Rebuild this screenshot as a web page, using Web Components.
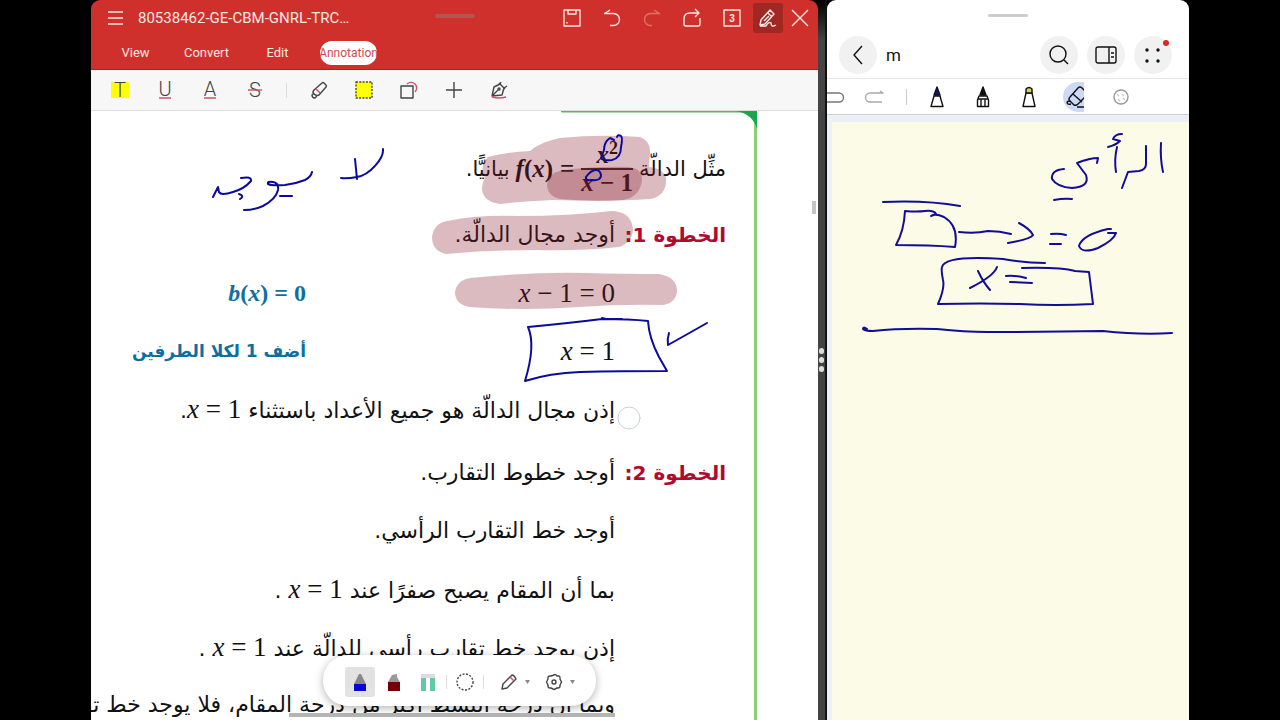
<!DOCTYPE html>
<html lang="ar">
<head>
<meta charset="utf-8">
<title>80538462-GE-CBM-GNRL-TRC</title>
<style>
  body {
    margin: 0;
    background: #000;
    font-family: Roboto, sans-serif;
  }
</style>
</head>
<body>
<split-screen>
  <pdf-window slot="start"></pdf-window>
  <notes-window slot="end"></notes-window>
</split-screen>

<script>
class SplitScreen extends HTMLElement {
  constructor() {
    super();
    this.attachShadow({ mode: "open" });
    this.shadowRoot.innerHTML = `
    <style>
      :host {
        display: flex;
        height: 100vh;
        padding: 0 91px;
        box-sizing: border-box;
        overflow: hidden;
      }
      .start { flex: 727; min-width: 0; display: flex; }
      .end { flex: 362; min-width: 0; display: flex; }
      .divider {
        flex: none;
        width: 9px;
        display: flex;
        flex-direction: column;
        align-items: center;
        justify-content: center;
        gap: 3px;
        background: linear-gradient(#000, #444 40px);
        border-right: 2px solid #111;
        box-sizing: border-box;
      }
      .divider i { width: 5px; height: 6px; border-radius: 3px; background: #ddd; }
    </style>
    <div class="start"><slot name="start"></slot></div>
    <div class="divider"><i></i><i></i><i></i></div>
    <div class="end"><slot name="end"></slot></div>
    `;
  }
}
customElements.define("split-screen", SplitScreen);

// Button that holds one svg icon
class ToolButton extends HTMLElement {
  constructor() {
    super();
    this.attachShadow({ mode: "open" });
  }

  connectedCallback() {
    this.shadowRoot.innerHTML = `
    <style>
      :host { display: flex; flex: none; align-items: center; justify-content: center; box-sizing: border-box; }
      button {
        display: flex;
        align-items: center;
        justify-content: center;
        width: var(--button-width, 30px);
        height: var(--button-height, 30px);
        padding: 0;
        border: 0;
        border-radius: var(--button-radius, 3px);
        background: var(--button-background, none);
        color: inherit;
        overflow: var(--button-overflow, visible);
      }
      ::slotted(svg) {
        display: block;
        flex: none;
        fill: none;
        stroke: currentColor;
        stroke-width: 1.4;
        stroke-linejoin: round;
        overflow: visible;
      }
    </style>
    <button type="button" aria-label="${this.getAttribute("label")}"><slot></slot></button>
    `;
  }
}
customElements.define("tool-button", ToolButton);

class PdfHeader extends HTMLElement {
  constructor() {
    super();
    this.attachShadow({ mode: "open" });
    this.shadowRoot.innerHTML = `
    <style>
      :host {
        display: block;
        position: relative;
        height: 70px;
        background: #d0302b;
        border-bottom: 1px solid #a92521;
        box-sizing: border-box;
        color: #fde8e4;
      }
      .bar { display: flex; align-items: center; height: 36px; padding: 0 2px 0 9px; }
      h1 { flex: 1; margin: 0 0 0 8px; font: 400 15px/36px Roboto, sans-serif; white-space: nowrap; }
      tool-button { width: 40px; }
      .narrow { width: 32px; }
      .menu { width: 30px; }
      .active { --button-background: #a12822; }
      .handle {
        position: absolute;
        left: 50%;
        top: 14px;
        width: 40px;
        height: 4px;
        margin-left: -20px;
        border-radius: 2px;
        background: #b4564f;
      }
      nav { display: flex; height: 34px; padding-left: 9px; align-items: center; }
      a {
        display: flex;
        justify-content: center;
        width: 71px;
        color: inherit;
        text-decoration: none;
        font-size: 13px;
        line-height: 24px;
      }
      a[aria-current] span {
        width: 57px;
        display: flex;
        justify-content: center;
        border-radius: 12px;
        background: #fff;
        color: #cf4a50;
        font-size: 12px;
      }
    </style>
    <div class="bar">
      <tool-button class="menu" label="Menu"><svg width="16" height="14" viewBox="0 0 16 14"><path d="M1 1h15M1 7h15M1 13h15"/></svg></tool-button>
      <h1 dir="ltr">80538462-GE-CBM-GNRL-TRC…</h1>
      <tool-button label="Save"><svg width="18" height="18" viewBox="0 0 18 18"><path d="M1 1h16v16H1zM5 1v4h8V1M4 13v1.500"/></svg></tool-button>
      <tool-button label="Undo"><svg width="18" height="18" viewBox="0 0 18 18"><path d="M7 1L1.500 4.500M1 4.500h9.500a6 6 0 0 1 0 12H7"/></svg></tool-button>
      <tool-button label="Redo"><svg width="18" height="18" viewBox="0 0 18 18" opacity=".35"><path d="M11 1l5.500 3.500M17 4.500H7.500a6 6 0 0 0 0 12H9"/></svg></tool-button>
      <tool-button label="Share"><svg width="18" height="18" viewBox="0 0 18 18"><path d="M1 9v6q0 2 2 2h12q2 0 2-2V9M1 10q0-6 6-6h9M12 0l4 4-4 4"/></svg></tool-button>
      <tool-button label="Pages"><svg width="18" height="18" viewBox="0 0 18 18"><path d="M1 1h16v16H1z"/><text x="9" y="13" text-anchor="middle" font-size="10" font-weight="700" fill="currentColor" stroke="none">3</text></svg></tool-button>
      <tool-button class="narrow active" label="Annotate"><svg width="18" height="18" viewBox="0 0 18 18"><path d="M2 11L11 1l4 4-9 10-5 1zM9 4l4 4M5 12l5-5M1 17h6q3-5 5-3 0 5 5 2"/></svg></tool-button>
      <tool-button class="narrow" label="Close"><svg width="16" height="16" viewBox="0 0 16 16"><path d="M0 0l16 16M16 0L0 16"/></svg></tool-button>
    </div>
    <div class="handle"></div>
    <nav dir="ltr">
      <a href="#view"><span>View</span></a>
      <a href="#convert"><span>Convert</span></a>
      <a href="#edit"><span>Edit</span></a>
      <a href="#annotation" aria-current="page"><span>Annotation</span></a>
    </nav>
    `;
  }
}
customElements.define("pdf-header", PdfHeader);

class AnnotationTools extends HTMLElement {
  constructor() {
    super();
    this.attachShadow({ mode: "open" });
    this.shadowRoot.innerHTML = `
    <style>
      :host {
        display: flex;
        align-items: center;
        height: 41px;
        padding-left: 6px;
        box-sizing: border-box;
        background: #f7f7f8;
        border-bottom: 1px solid #dcdcdc;
        color: #444;
      }
      tool-button { width: 45px; }
      .line { width: 1px; height: 15px; margin: 0 9px; background: #ddd; }
      text { font: 300 20px Roboto, sans-serif; fill: #444; stroke: none; text-anchor: middle; }
      .red { stroke: #d0506e; }
    </style>
    <tool-button label="Highlight"><svg width="18" height="18" viewBox="0 0 18 18"><path d="M0 1h18v16H0z" fill="#ff0" stroke="none"/><text x="9" y="16">T</text></svg></tool-button>
    <tool-button label="Underline"><svg width="18" height="18" viewBox="0 0 18 18"><text x="9" y="15">U</text><path class="red" d="M3 17h12"/></svg></tool-button>
    <tool-button label="Text colour"><svg width="18" height="18" viewBox="0 0 18 18"><text x="9" y="15">A</text><path class="red" d="M3 17h12"/></svg></tool-button>
    <tool-button label="Strikethrough"><svg width="18" height="18" viewBox="0 0 18 18"><text x="9" y="16">S</text><path class="red" d="M2 9h14"/></svg></tool-button>
    <div class="line"></div>
    <tool-button label="Marker"><svg width="18" height="18" viewBox="0 0 18 18"><path d="M4 9l8-7q1-1 2 0l2 2q1 1 0 2l-7 8q-3 1-5-1-2-2 0-4zM4 12l-2 2q0 3 3 3l2-2"/><path class="red" d="M6 8l4 4"/></svg></tool-button>
    <tool-button label="Area"><svg width="18" height="18" viewBox="0 0 18 18"><path d="M1 1h16v16H1z" fill="#ff0" stroke-dasharray="2 1.300"/></svg></tool-button>
    <tool-button label="Shapes"><svg width="18" height="18" viewBox="0 0 18 18"><path d="M1 5h12v12H1z"/><path class="red" d="M7 3a5 5 0 1 1 8 8"/></svg></tool-button>
    <tool-button label="Add"><svg width="18" height="18" viewBox="0 0 18 18"><path d="M1 9h16M9 1v16"/></svg></tool-button>
    <tool-button label="Signature"><svg width="18" height="18" viewBox="0 0 18 18"><path d="M2 15L4 6l6-3 4 4-2 7-10 1 6-6M9 2l6 6M10 3l1-2M14 7l3-2"/><circle cx="9" cy="8" r="1"/><path class="red" d="M2 16q7 2 14 0"/></svg></tool-button>
    `;
  }
}
customElements.define("annotation-tools", AnnotationTools);

// One row of the lesson: step label, statement, side note
class LessonLine extends HTMLElement {
  constructor() {
    super();
    this.attachShadow({ mode: "open" });
    this.shadowRoot.innerHTML = `
    <style>
      :host {
        display: grid;
        grid-template-columns: 111px 309px 1fr;
        height: 58px;
        line-height: 58px;
        white-space: nowrap;
      }
      .step { color: #b00a2e; font-size: 20px; font-weight: 700; }
      .note { color: #0f6f9f; font-size: 17px; font-weight: 700; }
      .text { min-width: 0; }
    </style>
    <div class="step"><slot name="step"></slot></div>
    <div class="text"><slot></slot></div>
    <div class="note"><slot name="note"></slot></div>
    `;
  }
}
customElements.define("lesson-line", LessonLine);

class LessonPage extends HTMLElement {
  constructor() {
    super();
    this.attachShadow({ mode: "open" });
    this.shadowRoot.innerHTML = `
    <style>
      :host { display: block; position: relative; flex: 1; min-height: 0; overflow: hidden; background: #fff; color: #111; }
      .text { padding-right: 92px; font: 22px "DejaVu Sans", sans-serif; }
      .problem { display: flex; align-items: center; gap: 6px; height: 95px; padding-top: 20px; box-sizing: border-box; font-size: 21px; }
      .next { margin-top: 6px; }
      bdi { font-family: "Liberation Serif", serif; font-size: 27px; }
      bdi[slot] { font-size: 24px; }
      .equation { display: flex; align-items: center; gap: 7px; font-weight: 700; font-size: 25px; }
      .fraction { display: flex; flex-direction: column; align-items: center; line-height: 26px; }
      .fraction span:first-child { border-bottom: 2px solid #222; align-self: stretch; text-align: center; }
      sup { font-size: 18px; line-height: 1px; }
      svg { position: absolute; left: 0; top: 0; fill: none; stroke: #0c0a9c; stroke-width: 2; stroke-linecap: round; stroke-linejoin: round; }
      .marker { fill: rgba(138, 30, 45, .3); stroke: none; }
      .scroll-y { position: absolute; right: 2px; top: 90px; width: 4px; height: 13px; background: #c4c4c4; }
      .scroll-x { position: absolute; left: 198px; bottom: 3px; width: 326px; height: 4px; background: #b5b5b5; }
    </style>
    <div class="text" dir="rtl">
      <div class="problem">
        <span>مثِّل الدالّة</span>
        <bdi class="equation" dir="ltr"><span><i>f</i>(<i>x</i>)</span><span>=</span><span class="fraction"><span><i>x</i><sup>2</sup></span><span><i>x</i> − 1</span></span></bdi>
        <span>بيانيًّا.</span>
      </div>
      <lesson-line><span slot="step">الخطوة 1:</span>أوجد مجال الدالّة.</lesson-line>
      <lesson-line><bdi dir="ltr"><i>x</i> − 1 = 0</bdi><bdi slot="note" dir="ltr"><i>b</i>(<i>x</i>) = 0</bdi></lesson-line>
      <lesson-line><bdi dir="ltr"><i>x</i> = 1</bdi><span slot="note">أضف 1 لكلا الطرفين</span></lesson-line>
      <lesson-line>إذن مجال الدالّة هو جميع الأعداد باستثناء <bdi dir="ltr"><i>x</i> = 1</bdi>.</lesson-line>
      <lesson-line class="next"><span slot="step">الخطوة 2:</span>أوجد خطوط التقارب.</lesson-line>
      <lesson-line>أوجد خط التقارب الرأسي.</lesson-line>
      <lesson-line>بما أن المقام يصبح صفرًا عند <bdi dir="ltr"><i>x</i> = 1</bdi> .</lesson-line>
      <lesson-line>إذن يوجد خط تقارب رأسي للدالّة عند <bdi dir="ltr"><i>x</i> = 1</bdi> .</lesson-line>
      <lesson-line>وبما أن درجة البسط أكبر من درجة المقام، فلا يوجد خط تقارب</lesson-line>
    </div>
    <svg width="727" height="609" viewBox="91 111 727 609" aria-hidden="true">
      <path d="M562 111.500h190" stroke="#5cb85c"/>
      <path d="M755.500 112v608" stroke="#8fce72" stroke-width="3" stroke-linecap="butt"/>
      <path d="M736 111h21v18q-4-15-21-18z" fill="#18a84c" stroke="none"/>
      <g class="marker">
        <path d="M488 157Q508 152 530 151 540 142 560 138 600 134 640 137 651 141 650 153L649 167Q664 169 666 178 667 196 650 199 610 202 553 200 525 201 500 204 484 202 482 190 482 183 485 178 479 165 488 157z"/>
        <path d="M560 171Q590 166 628 167 642 168 642 180 640 197 623 200 590 202 560 199 547 196 547 184 549 173 560 171z"/>
        <path d="M447 221Q475 215 517 216 570 216 611 211 631 211 633 229 633 242 619 247 580 251 537 250 490 250 446 254 432 251 432 237 434 223 447 221z"/>
        <path d="M470 278Q528 272 585 273 625 274 659 274 677 277 677 291 676 303 663 305 621 304 579 307 523 311 469 307 455 304 455 292 457 280 470 278z"/>
      </g>
      <path d="M614 140L610 138Q604 142 604 150L601 158Q603 161 612 160 621 158 621 147 623 138 621 136 618 134 617 137M596 170Q591 170 586 177 585 181 592 180 601 181 601 175 600 170 596 170"/>
      <path d="M528 327Q570 323 602 319 630 319 648 321 649 338 659 357L667 371Q620 371 580 372 550 373 525 381 536 345 528 327M602 318L606 319H622M669 333Q667 339 668 345L684 336 707 323"/>
      <path d="M383 149C384 158 370 175 357 177Q347 179 341 178M355 159L357 179M312 172Q311 177 305 180 295 184 285 185 272 186 268 184 267 181 273 182 279 183 278 190 276 199 263 206 254 210 244 210M280 196L292 196M241 178Q252 176 251 181 244 189 233 192 221 196 219 192L218 187 213 197M239 194Q245 196 240 199"/>
      <circle cx="629" cy="418" r="11" stroke="#c9d0da" stroke-width="1"/>
    </svg>
    <div class="scroll-y"></div>
    <div class="scroll-x"></div>
    `;
  }
}
customElements.define("lesson-page", LessonPage);

class PenPalette extends HTMLElement {
  constructor() {
    super();
    this.attachShadow({ mode: "open" });
    this.shadowRoot.innerHTML = `
    <style>
      :host {
        display: flex;
        align-items: center;
        height: 51px;
        padding: 3px 13px 0 20px;
        box-sizing: border-box;
        border-radius: 25px;
        background: #fff;
        box-shadow: 0 2px 8px rgba(0, 0, 0, .3);
        color: #444;
      }
      tool-button { width: 34px; }
      .wide { width: 45px; }
      .active { --button-background: #e2e2e2; }
      .line { width: 1px; height: 14px; background: #ddd; margin: 0 1px; }
      .last { margin-right: 9px; }
    </style>
    <tool-button class="active" label="Blue pen"><svg width="12" height="18" viewBox="0 0 12 18"><g stroke="none"><path d="M0 11L5 1h2l5 10z" fill="#888"/><path d="M0 11h12v7H0z" fill="#0505d5"/></g></svg></tool-button>
    <tool-button label="Red marker"><svg width="12" height="18" viewBox="0 0 12 18"><g stroke="none"><path d="M0 9l4-7 5-1v3l3 5z" fill="#999"/><path d="M0 9h12v9H0z" fill="#710006"/></g></svg></tool-button>
    <tool-button label="Ruler"><svg width="14" height="18" viewBox="0 0 14 18"><g stroke="none"><path d="M0 1h14v4H0z" fill="#ddd"/><path d="M0 5h5v13H0zM9 5h5v13H9z" fill="#60c9a8"/></g></svg></tool-button>
    <div class="line"></div>
    <tool-button label="Lasso"><svg width="18" height="18" viewBox="0 0 18 18"><circle cx="9" cy="9" r="8" stroke-dasharray="2 1.500"/></svg></tool-button>
    <div class="line last"></div>
    <tool-button class="wide" label="Pencil"><svg width="30" height="16" viewBox="0 0 30 16"><path d="M1 15l1-5 9-9q2 0 4 4l-9 9z"/><path d="M9 3l4 4" stroke="#d0506e"/><path d="M24 6h5l-2.500 4z" fill="#888" stroke="none"/></svg></tool-button>
    <tool-button class="wide" label="Settings"><svg width="30" height="16" viewBox="0 0 30 16"><path d="M8 1q1-1 2 0l1 1 2 0q1 0 1 2l0 1 1 2q1 1 0 2l-1 2 0 1q0 2-2 2l-1 0-2 1q-1 1-2 0l-2-1-1 0q-2 0-2-2l0-1-1-2q-1-1 0-2l1-2 0-1q0-2 2-2l1 0z"/><circle cx="8" cy="8" r="2"/><path d="M24 6h5l-2.500 4z" fill="#888" stroke="none"/></svg></tool-button>
    `;
  }
}
customElements.define("pen-palette", PenPalette);

class PdfWindow extends HTMLElement {
  constructor() {
    super();
    this.attachShadow({ mode: "open" });
    this.shadowRoot.innerHTML = `
    <style>
      :host { display: flex; flex-direction: column; flex: 1; min-width: 0; position: relative; overflow: hidden; border-radius: 9px 9px 0 0; }
      pen-palette { position: absolute; bottom: 14px; left: 232px; }
    </style>
    <pdf-header></pdf-header>
    <annotation-tools></annotation-tools>
    <lesson-page></lesson-page>
    <pen-palette></pen-palette>
    `;
  }
}
customElements.define("pdf-window", PdfWindow);

class NotesWindow extends HTMLElement {
  constructor() {
    super();
    this.attachShadow({ mode: "open" });
    this.shadowRoot.innerHTML = `
    <style>
      :host { display: flex; flex-direction: column; flex: 1; min-width: 0; overflow: hidden; background: #fff; border-radius: 9px 9px 0 0; color: #111; }
      .handle { align-self: center; width: 40px; height: 3px; margin: 14px 0 15px; border-radius: 2px; background: #ccc; }
      header { display: flex; align-items: center; height: 46px; padding: 0 17px 0 12px; gap: 9px; border-bottom: 1px solid #e8e8e8; --button-width: 38px; --button-height: 38px; --button-radius: 19px; --button-background: #f1f1f1; }
      h2 { flex: 1; margin: 0; font: 400 17px Roboto, sans-serif; }
      .tools { display: flex; align-items: center; height: 35px; overflow: hidden; border-bottom: 1px solid #cfd3d8; }
      .tools tool-button { width: 46px; }
      .tools .undo { width: 18px; color: #777; }
      .tools .redo { width: 58px; color: #aaa; }
      .line { width: 1px; height: 16px; margin: 0 7px 0 3px; background: #ccc; }
      .eraser { padding-right: 4px; --button-width: 21px; --button-radius: 15px 0 0 15px; --button-background: #ccdaf6; --button-overflow: hidden; }
      .sheet { flex: 1; min-height: 0; overflow: hidden; border: solid #eceff3; border-width: 7px 0 0 5px; background: #fbfbe8; }
      .sheet svg { display: block; fill: none; stroke: #120c96; stroke-width: 2; stroke-linecap: round; stroke-linejoin: round; }
    </style>
    <div class="handle"></div>
    <header>
      <tool-button label="Back"><svg width="10" height="18" viewBox="0 0 10 18"><path d="M9 0L1 9l8 9"/></svg></tool-button>
      <h2 dir="ltr">m</h2>
      <tool-button label="Search"><svg width="20" height="20" viewBox="0 0 20 20"><circle cx="9" cy="9" r="8"/><path d="M15 15l4 4"/></svg></tool-button>
      <tool-button label="Page list"><svg width="20" height="16" viewBox="0 0 20 16"><rect width="20" height="16" rx="2"/><path d="M13 0v16M15 6h3M15 10h3"/></svg></tool-button>
      <tool-button label="More"><svg width="38" height="38" viewBox="0 0 38 38"><g fill="#111" stroke="none"><circle cx="13" cy="14" r="1.700"/><circle cx="24" cy="14" r="1.700"/><circle cx="13" cy="25" r="1.700"/><circle cx="24" cy="25" r="1.700"/><circle cx="32" cy="7" r="3" fill="#d62b22"/></g></svg></tool-button>
    </header>
    <div class="tools">
      <tool-button class="undo" label="Undo"><svg width="18" height="12" viewBox="0 0 18 12"><path d="M0 2h12a4 4 0 0 1 0 9H0"/></svg></tool-button>
      <tool-button class="redo" label="Redo"><svg width="20" height="12" viewBox="0 0 20 12"><path d="M16 0l3 2H6a4 4 0 0 0 0 9h12"/></svg></tool-button>
      <div class="line"></div>
      <tool-button label="Pen"><svg width="12" height="20" viewBox="0 0 12 20"><path d="M3 9L0 19.500h12L9 9z"/><path d="M3 8L6 0l3 8z" fill="#11118c"/></svg></tool-button>
      <tool-button label="Pencil"><svg width="12" height="20" viewBox="0 0 12 20"><path d="M2 9l-1.500 4v6.500h11V13L10 9zM4 12v7M8 12v7M1 12h10"/><path d="M3 8l3-8 3 8z" fill="#111"/></svg></tool-button>
      <tool-button label="Highlighter"><svg width="12" height="20" viewBox="0 0 12 20"><path d="M3 6L0 19.500h12L9 6z"/><path d="M3 6V2q3-3 6 0v4z" fill="#d8d060"/></svg></tool-button>
      <tool-button class="eraser" label="Eraser"><svg width="21" height="22" viewBox="-4 0 21 22"><path d="M3 11L11 2q2-2 4 0l5 5M3 11q-2 2 0 4l4 4q2 1 4-1l9-9M6 8l9 8M0 17q0-2 3-2M0 17q1 2 4 1M10 21h10"/></svg></tool-button>
      <tool-button label="Texture"><svg width="16" height="16" viewBox="0 0 16 16" color="#999"><circle cx="8" cy="8" r="7"/><path d="M4 5l2 2M9 5l2 2M5 10l2 2M10 9l2 2" stroke="#ccc"/></svg></tool-button>
    </div>
    <div class="sheet">
      <svg width="357" height="598" viewBox="832 122 357 598" aria-hidden="true">
        <path d="M1161 143Q1160 158 1163 172M1146 146V164Q1146 170 1139 171L1128 172 1122 188M1117 147Q1114 160 1116 172M1122 134Q1115 134 1113 139L1120 141Q1116 145 1108 147M1097 163L1098 158Q1090 158 1077 163L1086 175Q1090 187 1072 188 1057 187 1052 179 1051 170 1064 169M1054 200Q1064 198 1072 199"/>
        <path d="M883 202Q926 200 960 206M905 211Q917 212 925 211 934 210 936 214L931 216Q935 213 944 217 959 226 955 247 930 245 896 245 904 231 905 211M959 232Q975 234 988 231 1000 231 1011 234M1019 223Q1030 229 1033 235 1031 239 1008 243M1051 234Q1059 233 1066 235M1050 244L1061 244M1108 233L1116 233Q1114 240 1098 248 1082 254 1079 246 1082 235 1108 229L1111 229"/>
        <path d="M1045 263Q1025 263 1003 259 945 255 942 267 941 270 943 280 945 288 938 304 980 303 1020 304 1055 306 1093 304L1089 272 1075 271Q1060 267 1022 268M978 271Q983 282 990 290M997 267Q994 276 970 288M1006 276Q1015 275 1026 278M1010 282L1032 283"/>
        <path d="M867 329Q863 326 863 329 865 331 873 331 900 328 937 329 965 332 987 332 1050 332 1103 331 1140 335 1172 333"/>
      </svg>
    </div>
    `;
  }
}
customElements.define("notes-window", NotesWindow);
</script>
</body>
</html>
